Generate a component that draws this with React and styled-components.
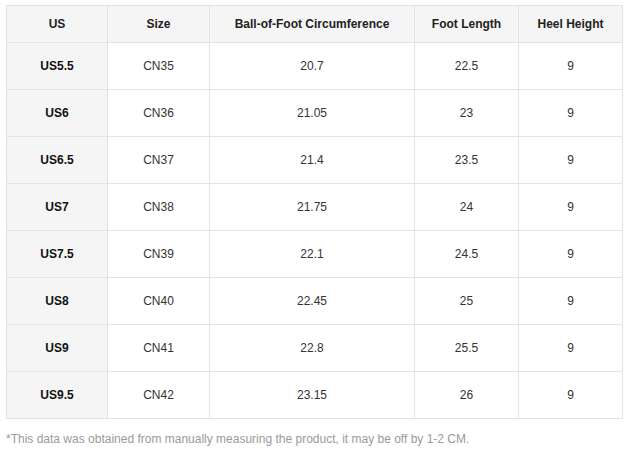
import React from "react";
import styled, { createGlobalStyle } from "styled-components";

const GlobalStyle = createGlobalStyle`
  body {
    margin: 0;
    background: #fff;
    font-family: "Liberation Sans", Arial, sans-serif;
  }
`;

const rows = [
  ["US5.5", "CN35", "20.7", "22.5", "9"],
  ["US6", "CN36", "21.05", "23", "9"],
  ["US6.5", "CN37", "21.4", "23.5", "9"],
  ["US7", "CN38", "21.75", "24", "9"],
  ["US7.5", "CN39", "22.1", "24.5", "9"],
  ["US8", "CN40", "22.45", "25", "9"],
  ["US9", "CN41", "22.8", "25.5", "9"],
  ["US9.5", "CN42", "23.15", "26", "9"],
];

const headers = ["US", "Size", "Ball-of-Foot Circumference", "Foot Length", "Heel Height"];
const widths = [101, 102, 205, 104, 104];

const Wrapper = styled.div`
  padding: 5px 6px 0 6px;
  width: 616px;
`;

const Table = styled.table`
  width: 616px;
  border-collapse: collapse;
  table-layout: fixed;
  font-size: 12px;
  color: #333;
`;

const Th = styled.th`
  height: 36px;
  padding: 0;
  background: #f5f5f5;
  border: 1px solid #e3e3e3;
  font-weight: bold;
  color: #222;
  text-align: center;
`;

const Td = styled.td`
  height: 46px;
  padding: 0;
  border: 1px solid #e3e3e3;
  text-align: center;
  background: ${(p) => (p.$label ? "#f5f5f5" : "#fff")};
  font-weight: ${(p) => (p.$label ? "bold" : "normal")};
  color: ${(p) => (p.$label ? "#111" : "#333")};
`;

const Note = styled.p`
  margin: 13px 0 0 0;
  font-size: 12px;
  color: #9a9a9a;
  line-height: 14px;
`;

export default function App() {
  return (
    <Wrapper>
      <GlobalStyle />
      <Table>
        <colgroup>
          {widths.map((w, i) => (
            <col key={i} style={{ width: w }} />
          ))}
        </colgroup>
        <thead>
          <tr>
            {headers.map((h) => (
              <Th key={h}>{h}</Th>
            ))}
          </tr>
        </thead>
        <tbody>
          {rows.map((r) => (
            <tr key={r[0]}>
              {r.map((c, i) => (
                <Td key={i} $label={i === 0}>
                  {c}
                </Td>
              ))}
            </tr>
          ))}
        </tbody>
      </Table>
      <Note>*This data was obtained from manually measuring the product, it may be off by 1-2 CM.</Note>
    </Wrapper>
  );
}
